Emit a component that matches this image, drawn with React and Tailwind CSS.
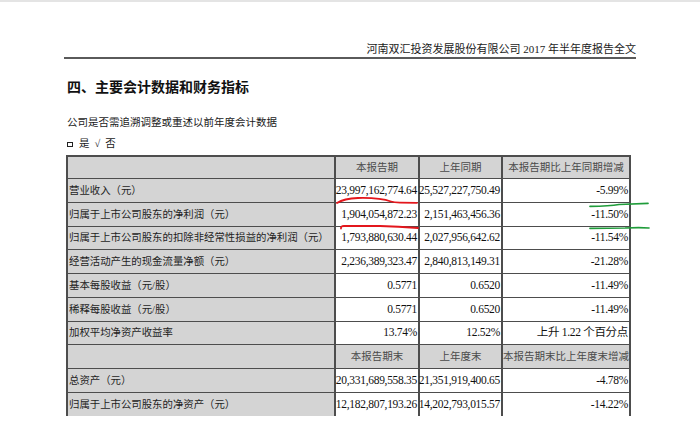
import React from "react";

const FONT = { fontFamily: "'Liberation Serif', 'Noto Sans CJK SC', serif" };

const rows = [
  { type: "head", h: 23, cells: ["", "本报告期", "上年同期", "本报告期比上年同期增减"], top: true },
  { h: 24, cells: ["营业收入（元）", "23,997,162,774.64", "25,527,227,750.49", "-5.99%"] },
  { h: 24, cells: ["归属于上市公司股东的净利润（元）", "1,904,054,872.23", "2,151,463,456.36", "-11.50%"] },
  { h: 23, cells: ["归属于上市公司股东的扣除非经常性损益的净利润（元）", "1,793,880,630.44", "2,027,956,642.62", "-11.54%"] },
  { h: 24, cells: ["经营活动产生的现金流量净额（元）", "2,236,389,323.47", "2,840,813,149.31", "-21.28%"] },
  { h: 24, cells: ["基本每股收益（元/股）", "0.5771", "0.6520", "-11.49%"] },
  { h: 24, cells: ["稀释每股收益（元/股）", "0.5771", "0.6520", "-11.49%"] },
  { h: 23, cells: ["加权平均净资产收益率", "13.74%", "12.52%", "上升 1.22 个百分点"] },
  { type: "head", h: 24, cells: ["", "本报告期末", "上年度末", "本报告期末比上年度末增减"] },
  { h: 24, cells: ["总资产（元）", "20,331,689,558.35", "21,351,919,400.65", "-4.78%"] },
  { h: 24, cells: ["归属于上市公司股东的净资产（元）", "12,182,807,193.26", "14,202,793,015.57", "-14.22%"] },
];

function Row({ row }) {
  const head = row.type === "head";
  const bt = row.top ? "border-t-2" : "border-t";
  return (
    <div className="grid grid-cols-[268px_84px_83px_130px]" style={{ height: row.h }}>
      {row.cells.map((c, i) => {
        const isLabel = i === 0;
        const bg = head || isLabel ? "bg-[#d4d4d4]" : "bg-white";
        const right = i === 3 ? "border-r-2" : "";
        let align;
        if (head && i > 0) align = "justify-center text-[10.5px] text-[#4a4a4a]";
        else if (isLabel) align = "justify-start pl-[1px] text-[10.4px] text-[#1e1e1e]";
        else align = "justify-end pr-[1px] text-[11.5px] text-[#111] tracking-[-0.3px]";
        return (
          <div
            key={i}
            className={`flex items-center whitespace-nowrap overflow-visible border-l-2 ${bt} ${right} border-[#4d4d4d] ${bg} ${align}`}
          >
            {c}
          </div>
        );
      })}
    </div>
  );
}

export default function App() {
  return (
    <div className="relative w-[700px] h-[429px] bg-white overflow-hidden" style={FONT}>
      <div className="absolute top-0 left-0 w-full h-[2px] bg-[#e4e4e4]" />
      <div className="ml-[64px] w-[572px] pt-[42px] pb-[1px] border-b-2 border-[#5a5a5a] text-right text-[11px] leading-[14px] text-[#1a1a1a]">
        河南双汇投资发展股份有限公司 2017 年半年度报告全文
      </div>
      <div className="ml-[67px] mt-[20px] text-[14px] leading-[18px] font-bold text-[#111]">
        四、主要会计数据和财务指标
      </div>
      <div className="ml-[67px] mt-[19px] text-[10.5px] leading-[14px] text-[#1a1a1a]">
        公司是否需追溯调整或重述以前年度会计数据
      </div>
      <div className="ml-[67px] mt-[7px] h-[14px] flex items-center text-[10.5px] leading-[14px] text-[#1a1a1a]">
        <span className="inline-block w-[6px] h-[5px] border border-[#222]" />
        <span className="ml-[6px]">是</span>
        <span className="ml-[5px]">√</span>
        <span className="ml-[5px]">否</span>
      </div>
      <div className="ml-[66px] mt-[4px] w-[565px]">
        {rows.map((r, i) => (
          <Row key={i} row={r} />
        ))}
      </div>
      <svg className="absolute inset-0 pointer-events-none" width="700" height="429" viewBox="0 0 700 429">
        <path d="M337 203 Q 344 198.5 358 198 Q 380 197.5 391 201.5 Q 394 202.6 400 202.6 L 417 202.8" fill="none" stroke="#e3161c" strokeWidth="1.8" strokeLinecap="round" />
        <path d="M341 228.5 Q 340.5 226 344 226 L 380 226 Q 398 226.3 418 228" fill="none" stroke="#e3161c" strokeWidth="1.8" strokeLinecap="round" />
        <path d="M590 206.3 Q 610 206.3 619 204.5 L 648 203.3" fill="none" stroke="#1f9c3a" strokeWidth="1.7" strokeLinecap="round" />
        <path d="M590 228.3 L 625 228 Q 640 227.4 649 228" fill="none" stroke="#1f9c3a" strokeWidth="1.7" strokeLinecap="round" />
      </svg>
    </div>
  );
}
